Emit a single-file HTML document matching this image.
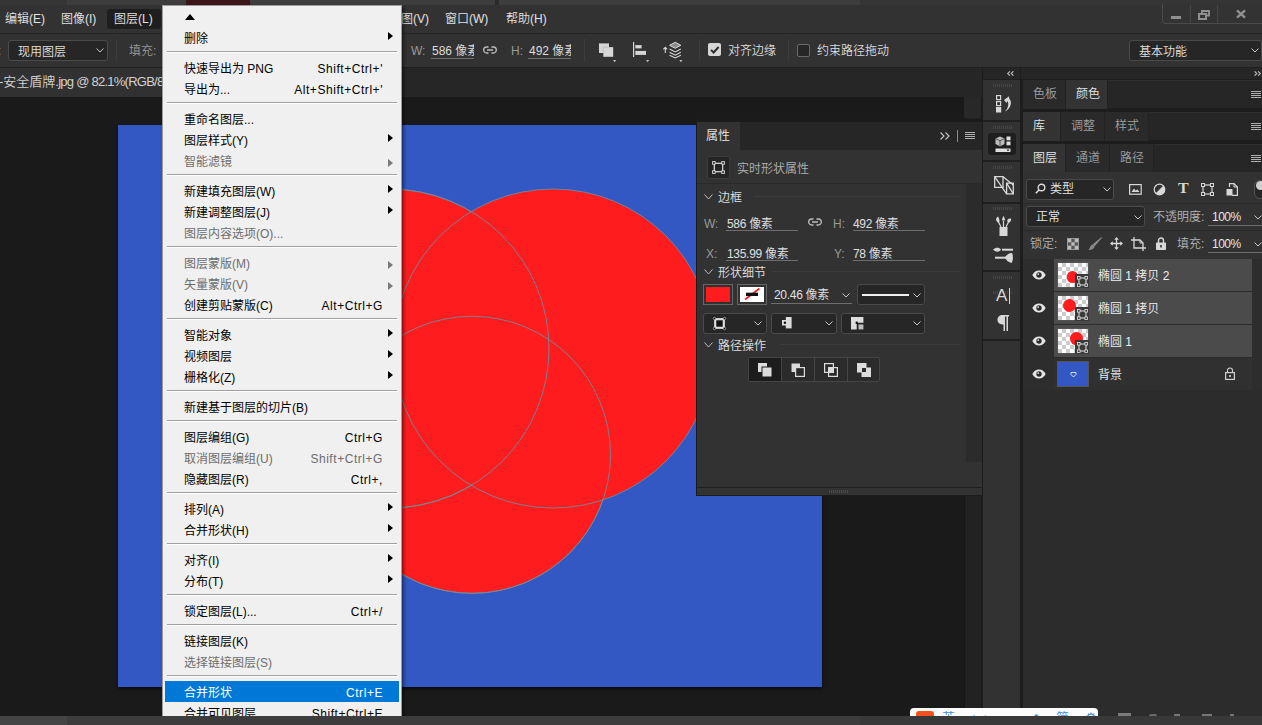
<!DOCTYPE html>
<html lang="zh-CN">
<head>
<meta charset="utf-8">
<title>Photoshop</title>
<style>
*{box-sizing:border-box;margin:0;padding:0}
html,body{width:1262px;height:725px;overflow:hidden;background:#1a1a1a}
body{position:relative;font-family:"Liberation Sans","Noto Sans CJK SC",sans-serif;font-size:12px;color:#d6d6d6;line-height:1;font-weight:350}
.a{position:absolute}
.t{position:absolute;white-space:nowrap;line-height:16px;height:16px}
svg{position:absolute;overflow:visible}
/* top strip */
#top{left:0;top:0;width:1262px;height:5px;background:#3d3d3d}
/* menubar */
#mbar{left:0;top:5px;width:1262px;height:29px;background:#323232;border-bottom:1px solid #262626}
#obar{left:0;top:34px;width:1262px;height:34px;background:#323232;border-bottom:1px solid #1f1f1f}
#tbar{left:0;top:68px;width:982px;height:29px;background:#262626}
.dd{position:absolute;border:1px solid #4a4a4a;border-radius:3px;background:#262626}
.dim{color:#9a9a9a}
.vsep{position:absolute;width:1px;background:#3d3d3d}

.mb{position:absolute;top:6px;height:16px;line-height:16px;white-space:nowrap;color:#e2e2e2}
.ul{position:absolute;height:1px;background:#6e6e6e}
.clip{overflow:hidden}
.chev{position:absolute;width:7px;height:7px}

.grip{position:absolute;left:10px;width:20px;height:3px;background:repeating-linear-gradient(90deg,#464646 0 1px,transparent 1px 2px)}
.isec{position:absolute;left:0;width:37px;border-top:1px solid #1f1f1f;border-bottom:1px solid #1f1f1f}
.ham{position:absolute;width:10px;height:7px;background:repeating-linear-gradient(180deg,#b0b0b0 0 1px,transparent 1px 2px)}
.lrow{position:absolute;left:1023px;width:239px;height:32px;background:#2d2d2d}
.lrow .bg{position:absolute;left:31px;top:0;width:198px;height:32px;background:#4b4b4b}
.lrow .nm{position:absolute;left:75px;top:9px;line-height:16px;color:#f0f0f0;white-space:nowrap}
.th{position:absolute;left:34px;top:3px;width:32px;height:26px;border:1px solid #555;background-color:#fff;background-image:linear-gradient(45deg,#ccc 25%,transparent 25%,transparent 75%,#ccc 75%),linear-gradient(45deg,#ccc 25%,transparent 25%,transparent 75%,#ccc 75%);background-size:8px 8px;background-position:0 0,4px 4px;overflow:hidden}
.th b{position:absolute;border-radius:50%;background:#fe1c1e}
.badge{position:absolute;left:52px;top:15px;width:14px;height:14px;background:#3a3a3a}
/* canvas */
#doc{left:118px;top:125px;width:704px;height:562px;background:#3358c4;box-shadow:0 2px 3px rgba(0,0,0,.6)}
/* popup menu */
#menu{left:162px;top:5px;width:240px;height:740px;background:#f0f0f0;border:1px solid #9c9c9c;box-shadow:2px 2px 3px rgba(0,0,0,.45);color:#000;padding:0 2px 0 2px;overflow:hidden;font-weight:400}
.mi{position:relative;height:21px}
.ml{position:absolute;left:19px;top:4px;line-height:16px;white-space:nowrap}
.mk{position:absolute;right:16px;top:4px;line-height:16px;white-space:nowrap;letter-spacing:.55px}
.ma{position:absolute;left:223px;top:5px;width:0;height:0;border-left:5px solid #000;border-top:4px solid transparent;border-bottom:4px solid transparent}
.up{position:absolute;left:20px;top:8px;width:0;height:0;border-bottom:6px solid #000;border-left:5.5px solid transparent;border-right:5.5px solid transparent}
.ms{height:9px;position:relative}
.ms i{position:absolute;left:2px;right:2px;top:3px;height:2px;border-top:1px solid #a0a0a0;border-bottom:1px solid #fff}
.dis{color:#6d6d6d}
.dis .ma{border-left-color:#7a7a7a;top:9px}
.hl{background:#0078d7;color:#fff}
/* right side */
#icol{left:982px;top:68px;width:39px;height:648px;background:#323232;border-left:1px solid #1c1c1c;border-right:1px solid #1c1c1c}
#rcol{left:1021px;top:68px;width:241px;height:648px;background:#1d1d1d}
.tabrow{position:absolute;left:1023px;width:239px;height:29px;background:#262626;border-top:1px solid #2e2e2e}
.tab{position:absolute;top:-1px;height:29px;line-height:28px;text-align:left;padding-left:10px;color:#a0a0a0;background:#2a2a2a;border-right:1px solid #222}
.tab.on{background:#333;color:#e6e6e6}
#bot{left:0;top:716px;width:1262px;height:9px;background:#3d3d3d}
</style>
</head>
<body>
<div class="a" id="top">
<div class="a" style="left:0;top:0;width:67px;height:5px;background:#353535"></div>
<div class="a" style="left:186px;top:0;width:64px;height:5px;background:#3c141a"></div>
<div class="a" style="left:495px;top:0;width:4px;height:5px;background:#2a2a2a"></div>
<div class="a" style="left:860px;top:0;width:402px;height:5px;background:#353535"></div>
</div>
<div class="a" id="mbar">
<div class="a" style="left:107px;top:4px;width:54px;height:20px;background:#1e1e1e;border-radius:3px"></div>
<div class="mb" style="left:5px">编辑(E)</div>
<div class="mb" style="left:61px">图像(I)</div>
<div class="mb" style="left:114px">图层(L)</div>
<div class="mb" style="left:171px">文字(Y)</div>
<div class="mb" style="left:228px">选择(S)</div>
<div class="mb" style="left:285px">滤镜(T)</div>
<div class="mb" style="left:342px">3D(D)</div>
<div class="mb" style="left:389px">视图(V)</div>
<div class="mb" style="left:445px">窗口(W)</div>
<div class="mb" style="left:506px">帮助(H)</div>
<div class="a" style="left:1162px;top:-1px;width:110px;height:20px;border:1px solid #4b4b4b;border-top:none;border-radius:0 0 0 4px;background:#333"></div>
<div class="a" style="left:1190px;top:0;width:1px;height:18px;background:#454545"></div>
<div class="a" style="left:1217px;top:0;width:1px;height:18px;background:#454545"></div>
<div class="a" style="left:1171px;top:11px;width:10px;height:3px;background:#909090"></div>
<svg style="left:1198px;top:5px" width="12" height="10" viewBox="0 0 12 10"><path d="M4 3V1h7v4.500h-2" fill="none" stroke="#909090" stroke-width="1.900"/><rect x="1" y="4" width="7" height="5" fill="none" stroke="#909090" stroke-width="2"/></svg>
<svg style="left:1236px;top:5px" width="10" height="8" viewBox="0 0 10 8"><path d="M1 0.300L9 7.700M9 0.300L1 7.700" stroke="#909090" stroke-width="2.400" fill="none"/></svg>
</div>
<div class="a" id="obar">
<div class="t dim" style="left:-2px;top:9px">:</div>
<div class="dd" style="left:8px;top:6px;width:100px;height:21px"></div>
<div class="t" style="left:18px;top:10px;color:#e0e0e0">现用图层</div>
<svg style="left:96px;top:14px" width="8" height="5" viewBox="0 0 8 5"><path d="M0.5 0.5L4 4L7.5 0.5" fill="none" stroke="#c8c8c8" stroke-width="1"/></svg>
<div class="vsep" style="left:116px;top:5px;height:22px"></div>
<div class="t dim" style="left:129px;top:9px">填充:</div>
<div class="t dim" style="left:411px;top:9px">W:</div>
<div class="t clip" style="left:432px;top:9px;width:42px;color:#dcdcdc">586 像素</div>
<div class="ul" style="left:431px;top:24px;width:43px"></div>
<svg style="left:483px;top:12px" width="14" height="8" viewBox="0 0 14 8"><path d="M5.5 1H3.7a3 3 0 0 0 0 6H5.5M8.5 1H10.3a3 3 0 0 1 0 6H8.5M4 4H10" fill="none" stroke="#bdbdbd" stroke-width="1.3"/></svg>
<div class="t dim" style="left:511px;top:9px">H:</div>
<div class="t clip" style="left:529px;top:9px;width:42px;color:#dcdcdc">492 像素</div>
<div class="ul" style="left:528px;top:24px;width:43px"></div>
<div class="vsep" style="left:584px;top:5px;height:22px"></div>
<svg style="left:599px;top:9px" width="18" height="20" viewBox="0 0 18 20"><rect x="0" y="0.400" width="10" height="9.600" fill="#d6d6d6"/><rect x="4.300" y="4.100" width="9.900" height="9.700" fill="#d6d6d6"/><path d="M4.300 10V4.100H10" fill="none" stroke="#b0b0b0" stroke-width="0.600"/><path d="M14 17.200h3.200l-1.600 1.900z" fill="#e0e0e0"/></svg>
<svg style="left:633px;top:8px" width="18" height="21" viewBox="0 0 18 21"><rect x="0" y="0" width="1.200" height="15" fill="#d6d6d6"/><rect x="2.300" y="3.100" width="6.300" height="3.300" fill="#d6d6d6"/><rect x="2.300" y="8.900" width="10.700" height="4" fill="#d6d6d6"/><path d="M13 18.200h3.200l-1.600 1.900z" fill="#e0e0e0"/></svg>
<svg style="left:663px;top:8px" width="20" height="21" viewBox="0 0 20 21"><path d="M2.300 11V5.500M0.400 7.400l1.900-2.100 1.900 2.100" fill="none" stroke="#d6d6d6" stroke-width="1.100"/><path d="M12.200 0.300l5.600 3-5.600 3-5.600-3z" fill="#8a8a8a" stroke="#dcdcdc" stroke-width="1"/><path d="M6.600 7l5.600 3 5.600-3M6.600 10.200l5.600 3 5.600-3M6.600 13.200l5.600 2.700 5.600-2.700" fill="none" stroke="#d6d6d6" stroke-width="1.100"/><path d="M16.300 18.200h3.200l-1.600 1.900z" fill="#e0e0e0"/></svg>
<div class="vsep" style="left:699px;top:5px;height:22px"></div>
<div class="a" style="left:708px;top:9px;width:13px;height:13px;background:#d6d6d6;border-radius:2px"></div>
<svg style="left:710px;top:12px" width="10" height="8" viewBox="0 0 10 8"><path d="M1 3.800l2.600 2.700L8.600 1" fill="none" stroke="#2a2a2a" stroke-width="1.900"/></svg>
<div class="t" style="left:728px;top:9px;color:#dcdcdc">对齐边缘</div>
<div class="vsep" style="left:788px;top:5px;height:22px"></div>
<div class="a" style="left:797px;top:10px;width:13px;height:13px;background:#262626;border:1px solid #6a6a6a;border-radius:2px"></div>
<div class="t" style="left:817px;top:9px;color:#dcdcdc">约束路径拖动</div>
<div class="dd" style="left:1129px;top:6px;width:133px;height:21px"></div>
<div class="t" style="left:1139px;top:10px;color:#e0e0e0">基本功能</div>
<svg style="left:1251px;top:14px" width="8" height="5" viewBox="0 0 8 5"><path d="M0.500 0.500L4 4L7.500 0.500" fill="none" stroke="#c8c8c8" stroke-width="1"/></svg>
</div>
<div class="a" id="tbar">
<div class="a" style="left:0;top:0;width:260px;height:29px;background:#313131"></div>
<div class="t" style="left:-1px;top:6px;font-size:13px;color:#d2d2d2">-安全盾牌<span style="letter-spacing:-.75px">.jpg @ 82.1%(RGB/8#)</span></div>
</div>
<div class="a" id="doc">
<svg style="left:0;top:0" width="704" height="562" viewBox="118 125 704 562">
<g fill="#fe1c1e" stroke="#728a98" stroke-width="0.9">
<circle cx="472" cy="454.8" r="138.500"/>
<circle cx="389.500" cy="348.500" r="159.500"/>
<circle cx="553" cy="348.500" r="159.500"/>
</g>
<g fill="none" stroke="#728a98" stroke-width="0.9">
<circle cx="472" cy="454.800" r="138.500"/>
<circle cx="389.500" cy="348.500" r="159.500"/>
</g>
</svg>
</div>
<div class="a" style="left:964px;top:97px;width:17px;height:619px;background:#222;border-left:1px solid #151515"></div>
<div class="a" style="left:964px;top:97px;width:17px;height:21px;background:#282828"></div>
<div class="a" id="icol">
<div class="a" style="left:0;top:0;width:37px;height:11px;background:#262626"></div>
<svg style="left:24px;top:3px" width="7" height="5" viewBox="0 0 8 7" preserveAspectRatio="none"><path d="M3.300 0.500L0.800 3.500L3.300 6.500M7.300 0.500L4.800 3.500L7.300 6.500" fill="none" stroke="#c4c4c4" stroke-width="1.300"/></svg>
<div class="isec" style="top:11px;height:42px"><div class="grip" style="top:4px"></div></div>
<div class="isec" style="top:53px;height:40px"><div class="grip" style="top:4px"></div></div>
<div class="isec" style="top:93px;height:42px"><div class="grip" style="top:4px"></div></div>
<div class="isec" style="top:135px;height:68px"><div class="grip" style="top:3px"></div></div>
<div class="isec" style="top:203px;height:69px"><div class="grip" style="top:4px"></div></div>
<div class="isec" style="top:272px;height:400px"><div class="grip" style="top:-50px"></div></div>
<!-- history icon -->
<svg style="left:13px;top:27px" width="17" height="18" viewBox="0 0 17 18"><rect x="0.6" y="0.6" width="4" height="4" fill="none" stroke="#d8d8d8" stroke-width="1.2"/><rect x="0.6" y="6.6" width="4" height="4" fill="none" stroke="#d8d8d8" stroke-width="1.2"/><rect x="0" y="12" width="5.2" height="5.5" fill="#d8d8d8"/><path d="M8 5L13 1.2L13.2 3.5C16.5 7 15 13.5 9 16.5C12.5 12.8 13 8.500 11.6 6L10.5 8z" fill="#d8d8d8"/></svg>
<!-- 3d icon -->
<div class="a" style="left:5px;top:65px;width:28px;height:22px;background:#1e1e1e;border-radius:3px"></div>
<svg style="left:12px;top:68px" width="16" height="17" viewBox="0 0 16 17"><path d="M5 0.500L9.500 2.500V8L5 10.500L0.500 8V2.500z" fill="#bdbdbd"/><path d="M0.500 2.500L5 4.800L9.500 2.500M5 4.800V10.500" fill="none" stroke="#444" stroke-width="0.900"/><rect x="11.500" y="0.500" width="4" height="3.800" fill="#e0e0e0"/><rect x="11.500" y="5.500" width="4" height="3.800" fill="#e0e0e0"/><rect x="0.500" y="12.500" width="15" height="3.500" fill="#e0e0e0"/><path d="M11.500 13.500h3l-1.500 1.800z" fill="#1e1e1e"/></svg>
<!-- icon 3 -->
<svg style="left:11px;top:108px" width="20" height="19" viewBox="0 0 20 19"><path d="M0.7 0.7h8.3v10.6h-8.3zM12.600 7.2h6.700v10.600h-6.700z" fill="none" stroke="#d8d8d8" stroke-width="1.3"/><path d="M0.7 0.7L12.600 17.800M9 0.7L19.300 9M12.600 7.2L19.300 17.800" fill="none" stroke="#d8d8d8" stroke-width="1.3"/></svg>
<!-- brushes -->
<svg style="left:12px;top:148px" width="17" height="20" viewBox="0 0 17 20"><rect x="4.500" y="11" width="8" height="9" fill="#d8d8d8"/><path d="M6 11L3.500 6M8.500 11V5M11 11L13.500 6" stroke="#d8d8d8" stroke-width="1.200" fill="none"/><path d="M1 4C1 1.500 3 0.500 3 0.500S5 3 4.300 6L2.500 6.500z" fill="#d8d8d8"/><path d="M7 4.500C7 2 8.500 0 8.500 0S10 2 10 4.500z" fill="#d8d8d8"/><path d="M12.500 6C11.500 3.500 13.500 2 16 2.500C16.500 4.500 15.500 6 14 6.800z" fill="#d8d8d8"/></svg>
<!-- brush settings -->
<svg style="left:10px;top:179px" width="21" height="17" viewBox="0 0 21 17"><path d="M0 2.500C3 0 6 0 8 2.500C6 5.500 3 5.500 0 2.500z" fill="#d8d8d8"/><rect x="9" y="1.700" width="11" height="2" fill="#d8d8d8"/><rect x="2" y="9.700" width="11" height="2" fill="#d8d8d8"/><path d="M12 10.500C14 6.500 17.500 5.500 19 6C20.500 9 20 14 18.500 16C16 15.500 13 13.500 12 10.500z" fill="#d8d8d8"/></svg>
<div class="t" style="left:13px;top:219px;font-size:17px;line-height:18px;height:18px;color:#d8d8d8">A</div>
<div class="a" style="left:26px;top:220px;width:1px;height:16px;background:#d8d8d8"></div>
<svg style="left:14px;top:247px" width="13" height="16" viewBox="0 0 13 16"><path d="M5.500 0H12V1.500H11V16H9.500V1.500H8V16H6.500V9.500H5.500C2.500 9.500 0.500 7.500 0.500 4.800S2.500 0 5.500 0z" fill="#d8d8d8"/></svg>
</div>
<div class="a" id="rcol">
<div class="a" style="left:0;top:0;width:241px;height:11px;background:#262626"></div>
<svg style="left:233px;top:3px" width="7" height="5" viewBox="0 0 8 7" preserveAspectRatio="none"><path d="M0.700 0.500L3.200 3.500L0.700 6.500M4.700 0.500L7.200 3.500L4.700 6.500" fill="none" stroke="#c4c4c4" stroke-width="1.300"/></svg>
</div>
<div class="tabrow" style="top:80px;height:28px"><div class="tab" style="left:0;width:43px">色板</div><div class="tab on" style="left:43px;width:42px">颜色</div><div class="ham" style="left:228px;top:10px"></div></div>
<div class="tabrow" style="top:112px;height:28px"><div class="tab on" style="left:0;width:38px">库</div><div class="tab" style="left:38px;width:44px">调整</div><div class="tab" style="left:82px;width:44px">样式</div><div class="ham" style="left:228px;top:10px"></div></div>
<div class="tabrow" style="top:144px;height:28px"><div class="tab on" style="left:0;width:43px;height:29px">图层</div><div class="tab" style="left:43px;width:44px">通道</div><div class="tab" style="left:87px;width:44px">路径</div><div class="ham" style="left:228px;top:10px"></div></div>
<div class="a" style="left:1023px;top:172px;width:239px;height:544px;background:#2c2c2c"></div>
<div class="a" id="lpanel" style="left:1023px;top:172px;width:239px;height:87px;background:#323232">
<div class="a" style="left:0;top:31px;width:239px;height:1px;background:#2a2a2a"></div>
<div class="a" style="left:0;top:58px;width:239px;height:1px;background:#2a2a2a"></div>
<div class="dd" style="left:3px;top:7px;width:88px;height:21px"></div>
<svg style="left:12px;top:11px" width="11" height="11" viewBox="0 0 11 11"><circle cx="6.500" cy="4.500" r="3.300" fill="none" stroke="#dcdcdc" stroke-width="1.400"/><path d="M4 7L0.800 10.200" stroke="#dcdcdc" stroke-width="1.600"/></svg>
<div class="t" style="left:27px;top:9px;color:#e6e6e6">类型</div>
<svg style="left:80px;top:15px" width="8" height="5" viewBox="0 0 8 5"><path d="M0.500 0.500L4 4L7.500 0.500" fill="none" stroke="#c8c8c8" stroke-width="1"/></svg>
<svg style="left:106px;top:12px" width="13" height="11" viewBox="0 0 13 11"><rect x="0.600" y="0.600" width="11.600" height="9.600" fill="none" stroke="#d8d8d8" stroke-width="1.200"/><path d="M2.500 8L5 4.500L6.800 6.800L8.300 5.200L10.500 8z" fill="#d8d8d8"/></svg>
<svg style="left:130px;top:11px" width="13" height="13" viewBox="0 0 13 13"><circle cx="6.500" cy="6.500" r="5.300" fill="none" stroke="#d8d8d8" stroke-width="1.200"/><path d="M10.300 2.700A5.300 5.300 0 0 1 2.700 10.300z" fill="#d8d8d8"/></svg>
<div class="t" style="left:155px;top:9px;font-family:'Liberation Serif',serif;font-weight:bold;font-size:16px;color:#d8d8d8;top:9px;left:155px;transform:scaleY(.85)">T</div>
<svg style="left:178px;top:11px" width="13" height="13" viewBox="0 0 13 13"><rect x="2" y="2" width="9" height="9" fill="none" stroke="#d8d8d8" stroke-width="1.200"/><g fill="#323232" stroke="#d8d8d8" stroke-width="1"><rect x="0.500" y="0.500" width="3" height="3"/><rect x="9.500" y="0.500" width="3" height="3"/><rect x="0.500" y="9.500" width="3" height="3"/><rect x="9.500" y="9.500" width="3" height="3"/></g></svg>
<svg style="left:203px;top:11px" width="12" height="13" viewBox="0 0 12 13"><path d="M3.500 4V0.600H8L11.400 4V12.400H6" fill="none" stroke="#d8d8d8" stroke-width="1.200"/><path d="M8 0.600V4H11.400" fill="none" stroke="#d8d8d8" stroke-width="1"/><rect x="0.500" y="6" width="6" height="6.500" fill="#d8d8d8"/></svg>
<div class="a" style="left:231px;top:8px;width:12px;height:19px;border:1px solid #555;border-radius:6px;background:#262626"></div>
<div class="a" style="left:233px;top:9px;width:9px;height:9px;border-radius:50%;background:#d0d0d0"></div>
<div class="dd" style="left:3px;top:34px;width:119px;height:21px"></div>
<div class="t" style="left:13px;top:37px;color:#e6e6e6">正常</div>
<svg style="left:111px;top:43px" width="8" height="5" viewBox="0 0 8 5"><path d="M0.500 0.500L4 4L7.500 0.500" fill="none" stroke="#c8c8c8" stroke-width="1"/></svg>
<div class="t dim" style="left:130px;top:37px;color:#b4b4b4">不透明度:</div>
<div class="t" style="left:189px;top:37px;color:#e6e6e6;letter-spacing:-.5px">100%</div>
<div class="ul" style="left:185px;top:53px;width:54px"></div>
<svg style="left:231px;top:43px" width="8" height="5" viewBox="0 0 8 5"><path d="M0.500 0.500L4 4L7.500 0.500" fill="none" stroke="#c8c8c8" stroke-width="1"/></svg>
<div class="t dim" style="left:7px;top:64px;color:#b4b4b4">锁定:</div>
<svg style="left:44px;top:66px" width="12" height="12" viewBox="0 0 12 12"><rect x="0.500" y="0.500" width="11" height="11" fill="#555" stroke="#9a9a9a"/><g fill="#bdbdbd"><rect x="1" y="1" width="3.300" height="3.300"/><rect x="7.700" y="1" width="3.300" height="3.300"/><rect x="4.300" y="4.300" width="3.400" height="3.400"/><rect x="1" y="7.700" width="3.300" height="3.300"/><rect x="7.700" y="7.700" width="3.300" height="3.300"/></g></svg>
<svg style="left:65px;top:65px" width="14" height="14" viewBox="0 0 14 14"><path d="M13.500 0L14 0.800L6.500 9.500L4.500 7.500z" fill="#8a8a8a"/><path d="M4.500 7.500L6.500 9.500C6 12 3 13.500 0.500 13C2 11.500 2 8.500 4.500 7.500z" fill="#8a8a8a"/></svg>
<svg style="left:87px;top:65px" width="13" height="13" viewBox="0 0 13 13"><path d="M6.500 1V12M1 6.500H12" stroke="#d8d8d8" stroke-width="1.300"/><path d="M6.500 0L8.800 2.800H4.200zM6.500 13L8.800 10.200H4.200zM0 6.500L2.800 4.200V8.800zM13 6.500L10.200 4.200V8.800z" fill="#d8d8d8"/></svg>
<svg style="left:108px;top:65px" width="15" height="14" viewBox="0 0 15 14"><path d="M3 0V11H15M0 3H9L12 6V14" fill="none" stroke="#d8d8d8" stroke-width="1.300" stroke-dasharray="30 0"/><path d="M9 3V6H12" fill="none" stroke="#d8d8d8" stroke-width="1"/></svg>
<svg style="left:133px;top:65px" width="10" height="13" viewBox="0 0 10 13"><path d="M2.500 6V3.500a2.500 2.500 0 0 1 5 0V6" fill="none" stroke="#d8d8d8" stroke-width="1.400"/><rect x="0" y="5.500" width="10" height="7.500" rx="0.800" fill="#d8d8d8"/><rect x="4.200" y="8" width="1.600" height="2.500" fill="#323232"/></svg>
<div class="t dim" style="left:154px;top:64px;color:#b4b4b4">填充:</div>
<div class="t" style="left:189px;top:64px;color:#e6e6e6;letter-spacing:-.5px">100%</div>
<div class="ul" style="left:185px;top:80px;width:54px"></div>
<svg style="left:231px;top:70px" width="8" height="5" viewBox="0 0 8 5"><path d="M0.500 0.500L4 4L7.500 0.500" fill="none" stroke="#c8c8c8" stroke-width="1"/></svg>
</div>
<div class="lrow" style="top:259px"><div class="bg"></div><svg style="left:9px;top:11px" width="14" height="10" viewBox="0 0 14 10"><path d="M0.300 5C2 1.800 4.400 0.400 7 0.400S12 1.800 13.700 5C12 8.200 9.600 9.600 7 9.600S2 8.200 0.300 5z" fill="#e6e6e6"/><circle cx="7" cy="5" r="2.700" fill="#2d2d2d"/><circle cx="6.200" cy="4.100" r="0.900" fill="#e6e6e6"/></svg><div class="th"><b style="left:8.9px;top:8.1px;width:11.6px;height:11.6px"></b></div><div class="badge"><svg style="left:2px;top:2px" width="11" height="11" viewBox="0 0 11 11"><rect x="2" y="2" width="7" height="7" fill="none" stroke="#e6e6e6" stroke-width="1"/><g fill="#3a3a3a" stroke="#e6e6e6" stroke-width="0.800"><rect x="0.500" y="0.500" width="2.600" height="2.600"/><rect x="7.900" y="0.500" width="2.600" height="2.600"/><rect x="0.500" y="7.900" width="2.600" height="2.600"/><rect x="7.900" y="7.900" width="2.600" height="2.600"/></g></svg></div><div class="nm">椭圆 1 拷贝 2</div></div><div class="lrow" style="top:292px"><div class="bg"></div><svg style="left:9px;top:11px" width="14" height="10" viewBox="0 0 14 10"><path d="M0.300 5C2 1.800 4.400 0.400 7 0.400S12 1.800 13.700 5C12 8.200 9.600 9.600 7 9.600S2 8.200 0.300 5z" fill="#e6e6e6"/><circle cx="7" cy="5" r="2.700" fill="#2d2d2d"/><circle cx="6.200" cy="4.100" r="0.900" fill="#e6e6e6"/></svg><div class="th"><b style="left:4.6px;top:2.8px;width:13.2px;height:13.2px"></b></div><div class="badge"><svg style="left:2px;top:2px" width="11" height="11" viewBox="0 0 11 11"><rect x="2" y="2" width="7" height="7" fill="none" stroke="#e6e6e6" stroke-width="1"/><g fill="#3a3a3a" stroke="#e6e6e6" stroke-width="0.800"><rect x="0.500" y="0.500" width="2.600" height="2.600"/><rect x="7.900" y="0.500" width="2.600" height="2.600"/><rect x="0.500" y="7.900" width="2.600" height="2.600"/><rect x="7.900" y="7.900" width="2.600" height="2.600"/></g></svg></div><div class="nm">椭圆 1 拷贝</div></div><div class="lrow" style="top:325px"><div class="bg"></div><svg style="left:9px;top:11px" width="14" height="10" viewBox="0 0 14 10"><path d="M0.300 5C2 1.800 4.400 0.400 7 0.400S12 1.800 13.700 5C12 8.200 9.600 9.600 7 9.600S2 8.200 0.300 5z" fill="#e6e6e6"/><circle cx="7" cy="5" r="2.700" fill="#2d2d2d"/><circle cx="6.200" cy="4.100" r="0.900" fill="#e6e6e6"/></svg><div class="th"><b style="left:11.9px;top:3.1px;width:12.8px;height:12.8px"></b></div><div class="badge"><svg style="left:2px;top:2px" width="11" height="11" viewBox="0 0 11 11"><rect x="2" y="2" width="7" height="7" fill="none" stroke="#e6e6e6" stroke-width="1"/><g fill="#3a3a3a" stroke="#e6e6e6" stroke-width="0.800"><rect x="0.500" y="0.500" width="2.600" height="2.600"/><rect x="7.900" y="0.500" width="2.600" height="2.600"/><rect x="0.500" y="7.900" width="2.600" height="2.600"/><rect x="7.900" y="7.900" width="2.600" height="2.600"/></g></svg></div><div class="nm">椭圆 1</div></div><div class="lrow" style="top:358px;background:#2d2d2d"><div class="bg" style="background:#303030"></div><svg style="left:9px;top:11px" width="14" height="10" viewBox="0 0 14 10"><path d="M0.300 5C2 1.800 4.400 0.400 7 0.400S12 1.800 13.700 5C12 8.200 9.600 9.600 7 9.600S2 8.200 0.300 5z" fill="#e6e6e6"/><circle cx="7" cy="5" r="2.700" fill="#2d2d2d"/><circle cx="6.200" cy="4.100" r="0.900" fill="#e6e6e6"/></svg><div class="th" style="background:#3358c4;border-color:#555"><svg style="left:12px;top:9px" width="7" height="7" viewBox="0 0 7 7"><path d="M1 1.500h5v2L3.500 6L1 3.500z" fill="none" stroke="#fff" stroke-width="0.800"/></svg></div><div class="nm">背景</div>
<svg style="left:202px;top:9px" width="10" height="13" viewBox="0 0 10 13"><path d="M2.500 5.500V3.500a2.500 2.500 0 0 1 5 0V5.500" fill="none" stroke="#d0d0d0" stroke-width="1.100"/><rect x="0.600" y="5.600" width="8.800" height="6.800" fill="none" stroke="#d0d0d0" stroke-width="1.200"/><rect x="4.200" y="8" width="1.600" height="2" fill="#d0d0d0"/></svg></div>
<div class="a" id="prop" style="left:696px;top:119px;width:286px;height:377px;background:#1b1b1b">
<div class="a" style="left:1px;top:3px;width:285px;height:28px;background:#262626"></div>
<div class="a" style="left:1px;top:3px;width:43px;height:29px;background:#323232"></div>
<div class="t" style="left:10px;top:9px;color:#ececec">属性</div>
<svg style="left:244px;top:13px" width="10" height="8" viewBox="0 0 10 8"><path d="M0.500 0.500L4 4L0.500 7.500M5.500 0.500L9 4L5.500 7.500" fill="none" stroke="#c8c8c8" stroke-width="1.100"/></svg>
<div class="a" style="left:261px;top:11px;width:1px;height:12px;background:#8a8a8a"></div>
<div class="ham" style="left:269px;top:13px"></div>
<div class="a" style="left:1px;top:31px;width:285px;height:337px;background:#323232"></div>
<div class="a" style="left:1px;top:64px;width:285px;height:1px;background:#2a2a2a"></div>
<div class="a" style="left:270px;top:65px;width:16px;height:278px;background:#2b2b2b"></div>
<div class="a" style="left:11px;top:37px;width:23px;height:23px;background:#242424;border:1px solid #3c3c3c;border-radius:2px"></div>
<svg style="left:16px;top:42px" width="13" height="13" viewBox="0 0 13 13"><rect x="2.300" y="2.300" width="8.400" height="8.400" fill="none" stroke="#e0e0e0" stroke-width="1.200"/><g fill="#242424" stroke="#e0e0e0" stroke-width="0.900"><rect x="0.600" y="0.600" width="2.600" height="2.600"/><rect x="9.800" y="0.600" width="2.600" height="2.600"/><rect x="0.600" y="9.800" width="2.600" height="2.600"/><rect x="9.800" y="9.800" width="2.600" height="2.600"/></g></svg>
<div class="t" style="left:41px;top:42px;color:#b4b4b4">实时形状属性</div>
<svg style="left:8px;top:75px" width="9" height="6" viewBox="0 0 9 6"><path d="M0.500 0.500L4.500 5L8.500 0.500" fill="none" stroke="#bdbdbd" stroke-width="1"/></svg>
<div class="t" style="left:22px;top:71px;color:#e0e0e0">边框</div>
<div class="a" style="left:58px;top:77px;width:206px;height:1px;background:#3c3c3c"></div>
<div class="t dim" style="left:8px;top:97px">W:</div>
<div class="t" style="left:31px;top:97px;color:#e0e0e0;letter-spacing:-.3px">586 像素</div>
<div class="ul" style="left:30px;top:111px;width:72px"></div>
<svg style="left:112px;top:99px" width="14" height="8" viewBox="0 0 14 8"><path d="M5.5 1H3.7a3 3 0 0 0 0 6H5.5M8.5 1H10.3a3 3 0 0 1 0 6H8.5M4 4H10" fill="none" stroke="#bdbdbd" stroke-width="1.3"/></svg>
<div class="t dim" style="left:137px;top:97px">H:</div>
<div class="t" style="left:157px;top:97px;color:#e0e0e0;letter-spacing:-.3px">492 像素</div>
<div class="ul" style="left:157px;top:111px;width:72px"></div>
<div class="t dim" style="left:10px;top:127px">X:</div>
<div class="t" style="left:31px;top:127px;color:#e0e0e0;letter-spacing:-.3px">135.99 像素</div>
<div class="ul" style="left:30px;top:141px;width:72px"></div>
<div class="t dim" style="left:138px;top:127px">Y:</div>
<div class="t" style="left:157px;top:127px;color:#e0e0e0;letter-spacing:-.3px">78 像素</div>
<div class="ul" style="left:157px;top:141px;width:72px"></div>
<svg style="left:8px;top:150px" width="9" height="6" viewBox="0 0 9 6"><path d="M0.500 0.500L4.500 5L8.500 0.500" fill="none" stroke="#bdbdbd" stroke-width="1"/></svg>
<div class="t" style="left:22px;top:146px;color:#e0e0e0">形状细节</div>
<div class="a" style="left:76px;top:152px;width:188px;height:1px;background:#3c3c3c"></div>
<div class="a" style="left:7px;top:165px;width:30px;height:21px;background:#fe1c1e;background-clip:content-box;border:1px solid #666;padding:2px"></div>
<div class="a" style="left:41px;top:165px;width:30px;height:21px;background:#fff;background-clip:content-box;border:1px solid #666;padding:2px"></div>
<svg style="left:44px;top:168px" width="24" height="15" viewBox="0 0 24 15"><path d="M5 12.500L19.500 1.500" stroke="#e8222a" stroke-width="1.700"/><rect x="6" y="5.700" width="12" height="3.300" fill="#111"/></svg>
<div class="t" style="left:78px;top:168px;color:#e0e0e0;letter-spacing:-.3px">20.46 像素</div>
<div class="ul" style="left:75px;top:184px;width:81px"></div>
<svg style="left:146px;top:174px" width="8" height="5" viewBox="0 0 8 5"><path d="M0.500 0.500L4 4L7.500 0.500" fill="none" stroke="#c8c8c8" stroke-width="1"/></svg>
<div class="dd" style="left:161px;top:165px;width:68px;height:21px"></div>
<div class="a" style="left:166px;top:175px;width:47px;height:2px;background:#f0f0f0"></div>
<svg style="left:217px;top:174px" width="8" height="5" viewBox="0 0 8 5"><path d="M0.500 0.500L4 4L7.500 0.500" fill="none" stroke="#c8c8c8" stroke-width="1"/></svg>
<div class="dd" style="left:7px;top:194px;width:64px;height:21px"></div>
<div class="dd" style="left:75px;top:194px;width:66px;height:21px"></div>
<div class="dd" style="left:145px;top:194px;width:84px;height:21px"></div>
<svg style="left:17px;top:198px" width="13" height="13" viewBox="0 0 13 13"><rect x="2.200" y="2.200" width="8.600" height="8.600" fill="#111" stroke="#dcdcdc" stroke-width="2.200"/><g fill="#111" stroke="#dcdcdc" stroke-width="0.600"><circle cx="1.500" cy="1.500" r="1.200"/><circle cx="11.500" cy="1.500" r="1.200"/><circle cx="1.500" cy="11.500" r="1.200"/><circle cx="11.500" cy="11.500" r="1.200"/></g></svg>
<svg style="left:58px;top:202px" width="8" height="5" viewBox="0 0 8 5"><path d="M0.500 0.500L4 4L7.500 0.500" fill="none" stroke="#c8c8c8" stroke-width="1"/></svg>
<svg style="left:86px;top:198px" width="10" height="12" viewBox="0 0 10 12"><rect x="3.800" y="0" width="5.800" height="11.400" fill="#dcdcdc"/><rect x="0" y="3" width="4" height="5.500" fill="#dcdcdc"/><circle cx="2.900" cy="5.700" r="1.200" fill="#111"/></svg>
<svg style="left:129px;top:202px" width="8" height="5" viewBox="0 0 8 5"><path d="M0.500 0.500L4 4L7.500 0.500" fill="none" stroke="#c8c8c8" stroke-width="1"/></svg>
<svg style="left:155px;top:198px" width="13" height="13" viewBox="0 0 13 13"><path d="M0 0H12.400V5.700H5.700V12.400H0z" fill="#dcdcdc"/><rect x="7.500" y="7.500" width="4.900" height="4.900" fill="#bdbdbd"/><circle cx="5.700" cy="5.700" r="1.200" fill="#111"/></svg>
<svg style="left:217px;top:202px" width="8" height="5" viewBox="0 0 8 5"><path d="M0.500 0.500L4 4L7.500 0.500" fill="none" stroke="#c8c8c8" stroke-width="1"/></svg>
<svg style="left:8px;top:223px" width="9" height="6" viewBox="0 0 9 6"><path d="M0.500 0.500L4.500 5L8.500 0.500" fill="none" stroke="#bdbdbd" stroke-width="1"/></svg>
<div class="t" style="left:22px;top:219px;color:#e0e0e0">路径操作</div>
<div class="a" style="left:84px;top:225px;width:180px;height:1px;background:#3c3c3c"></div>
<div class="a" style="left:52px;top:238px;width:132px;height:25px;background:#2b2b2b;border:1px solid #454545;border-radius:2px"></div>
<div class="a" style="left:53px;top:239px;width:32px;height:23px;background:#1c1c1c"></div>
<div class="a" style="left:85px;top:239px;width:1px;height:23px;background:#454545"></div>
<div class="a" style="left:118px;top:239px;width:1px;height:23px;background:#454545"></div>
<div class="a" style="left:151px;top:239px;width:1px;height:23px;background:#454545"></div>
<svg style="left:62px;top:244px" width="14" height="14" viewBox="0 0 14 14"><rect x="0" y="0" width="9" height="9" fill="#dcdcdc"/><rect x="4" y="4" width="10" height="10" fill="#dcdcdc" stroke="#1c1c1c" stroke-width="1"/></svg>
<svg style="left:95px;top:244px" width="14" height="14" viewBox="0 0 14 14"><path d="M0.500 0.500H9V4H4V9H0.500z" fill="#dcdcdc"/><rect x="4.600" y="4.600" width="8.800" height="8.800" fill="none" stroke="#dcdcdc" stroke-width="1.200"/></svg>
<svg style="left:128px;top:244px" width="14" height="14" viewBox="0 0 14 14"><rect x="0.600" y="0.600" width="8.800" height="8.800" fill="none" stroke="#dcdcdc" stroke-width="1.200"/><rect x="4.600" y="4.600" width="8.800" height="8.800" fill="none" stroke="#dcdcdc" stroke-width="1.200"/><rect x="5" y="5" width="4" height="4" fill="#dcdcdc"/></svg>
<svg style="left:161px;top:244px" width="14" height="14" viewBox="0 0 14 14"><rect x="0" y="0" width="9.500" height="9.500" fill="#dcdcdc"/><rect x="4.500" y="4.500" width="9.500" height="9.500" fill="#dcdcdc"/><rect x="5" y="5" width="4" height="4" fill="#2b2b2b"/></svg>
<div class="a" style="left:1px;top:368px;width:285px;height:1px;background:#1f1f1f"></div>
<div class="a" style="left:1px;top:369px;width:285px;height:7px;background:#323232"></div>
<div class="a" style="left:133px;top:371px;width:20px;height:3px;background:repeating-linear-gradient(90deg,#4a4a4a 0 1px,transparent 1px 2px)"></div>
</div>
<div class="a" id="menu">
<div class="mi"><span class="up"></span></div>
<div class="mi"><span class="ml">删除</span><span class="ma"></span></div>
<div class="ms"><i></i></div>
<div class="mi"><span class="ml">快速导出为 PNG</span><span class="mk">Shift+Ctrl+'</span></div>
<div class="mi"><span class="ml">导出为...</span><span class="mk">Alt+Shift+Ctrl+'</span></div>
<div class="ms"><i></i></div>
<div class="mi"><span class="ml">重命名图层...</span></div>
<div class="mi"><span class="ml">图层样式(Y)</span><span class="ma"></span></div>
<div class="mi dis"><span class="ml">智能滤镜</span><span class="ma"></span></div>
<div class="ms"><i></i></div>
<div class="mi"><span class="ml">新建填充图层(W)</span><span class="ma"></span></div>
<div class="mi"><span class="ml">新建调整图层(J)</span><span class="ma"></span></div>
<div class="mi dis"><span class="ml">图层内容选项(O)...</span></div>
<div class="ms"><i></i></div>
<div class="mi dis"><span class="ml">图层蒙版(M)</span><span class="ma"></span></div>
<div class="mi dis"><span class="ml">矢量蒙版(V)</span><span class="ma"></span></div>
<div class="mi"><span class="ml">创建剪贴蒙版(C)</span><span class="mk">Alt+Ctrl+G</span></div>
<div class="ms"><i></i></div>
<div class="mi"><span class="ml">智能对象</span><span class="ma"></span></div>
<div class="mi"><span class="ml">视频图层</span><span class="ma"></span></div>
<div class="mi"><span class="ml">栅格化(Z)</span><span class="ma"></span></div>
<div class="ms"><i></i></div>
<div class="mi"><span class="ml">新建基于图层的切片(B)</span></div>
<div class="ms"><i></i></div>
<div class="mi"><span class="ml">图层编组(G)</span><span class="mk">Ctrl+G</span></div>
<div class="mi dis"><span class="ml">取消图层编组(U)</span><span class="mk">Shift+Ctrl+G</span></div>
<div class="mi"><span class="ml">隐藏图层(R)</span><span class="mk">Ctrl+,</span></div>
<div class="ms"><i></i></div>
<div class="mi"><span class="ml">排列(A)</span><span class="ma"></span></div>
<div class="mi"><span class="ml">合并形状(H)</span><span class="ma"></span></div>
<div class="ms"><i></i></div>
<div class="mi"><span class="ml">对齐(I)</span><span class="ma"></span></div>
<div class="mi"><span class="ml">分布(T)</span><span class="ma"></span></div>
<div class="ms"><i></i></div>
<div class="mi"><span class="ml">锁定图层(L)...</span><span class="mk">Ctrl+/</span></div>
<div class="ms"><i></i></div>
<div class="mi"><span class="ml">链接图层(K)</span></div>
<div class="mi dis"><span class="ml">选择链接图层(S)</span></div>
<div class="ms"><i></i></div>
<div class="mi hl"><span class="ml">合并形状</span><span class="mk">Ctrl+E</span></div>
<div class="mi"><span class="ml">合并可见图层</span><span class="mk">Shift+Ctrl+E</span></div>
</div>
<div class="a" id="bot"><div class="a" style="left:0;top:0;width:67px;height:9px;background:#444"></div><div class="a" style="left:860px;top:0;width:402px;height:9px;background:#393939"></div></div>
<div class="a" style="left:910px;top:708px;width:188px;height:8px;background:#fdfdfd;border-radius:4px 4px 0 0;overflow:hidden"><div class="a" style="left:6px;top:3px;width:18px;height:8px;background:#f4511e;border-radius:3px 3px 0 0"></div><div class="t" style="left:32px;top:0;color:#3a8ee6;font-size:13px;top:2px;letter-spacing:6px">英 ♪• ▬ ♣ 简 ⚙</div></div>
<div class="a" style="left:1118px;top:713px;width:13px;height:3px;background:#7a7a7a"></div>
<div class="a" style="left:1149px;top:714px;width:8px;height:2px;background:#6a6a6a;border-radius:4px 4px 0 0"></div>
<div class="a" style="left:1174px;top:714px;width:6px;height:2px;background:#777"></div>
<div class="a" style="left:1202px;top:714px;width:10px;height:2px;background:#777"></div>
<div class="a" style="left:1230px;top:714px;width:4px;height:2px;background:#777"></div>
</body>
</html>
